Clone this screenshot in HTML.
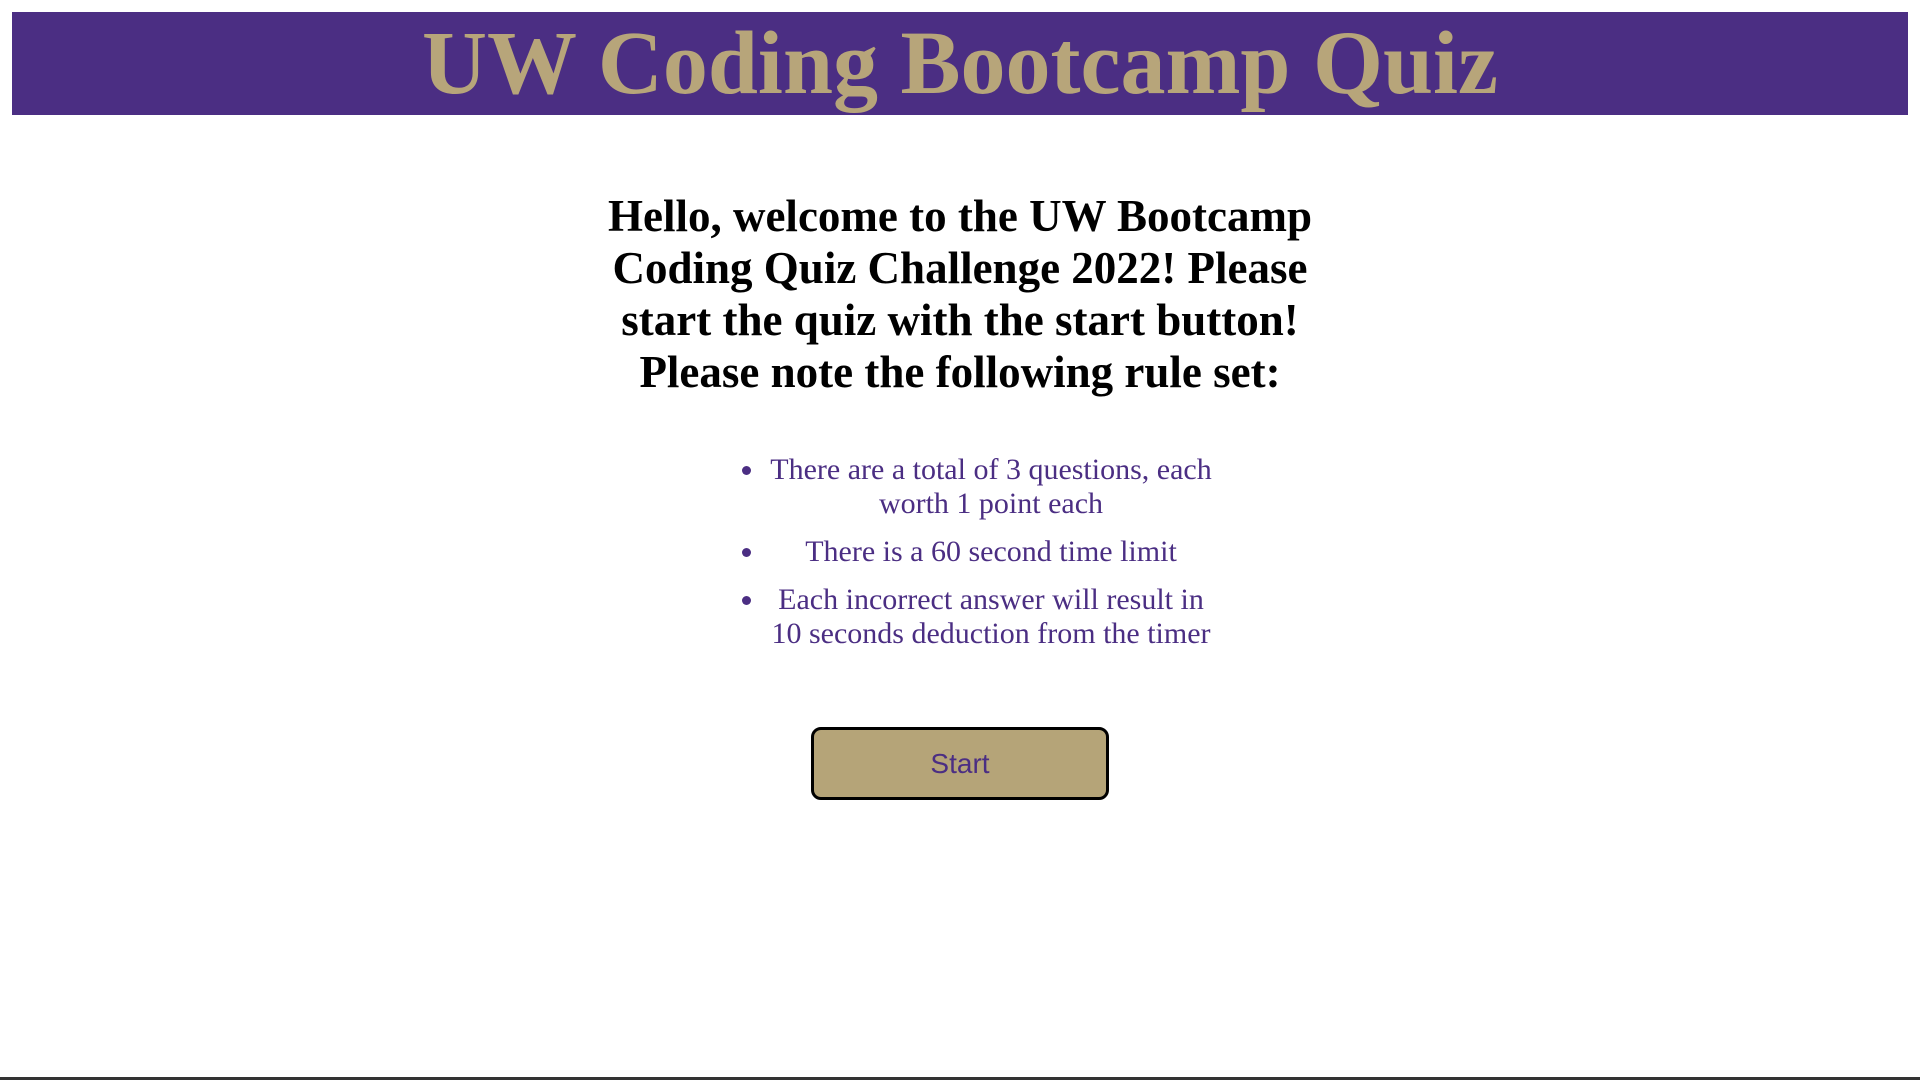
<!DOCTYPE html>
<html><head><style>
html,body{margin:0;padding:0;width:1920px;height:1080px;background:#fff;overflow:hidden;position:relative}
.hdr{position:absolute;left:12px;top:12px;width:1896px;height:103px;background:#4b2e83}
.hdr h1{margin:0;text-align:center;font:bold 90px/103px "Liberation Serif",serif;color:#b7a57a;white-space:nowrap}
.intro{position:absolute;left:460px;width:1000px;top:190px;text-align:center;font:bold 45px/52px "Liberation Serif",serif;color:#000;margin:0;white-space:nowrap}
ul{position:absolute;left:726px;top:453px;width:450px;margin:0;padding:0 0 0 40px;color:#4b2e83;font:30px/34px "Liberation Serif",serif;text-align:center}
ul li{margin-bottom:14px}
.btn{position:absolute;left:811px;top:727px;width:292px;height:67px;border:3px solid #000;border-radius:10px;background:#b5a478;color:#4b2e83;font:28px/67px "Liberation Sans",sans-serif;text-align:center}
.bot{position:absolute;left:0;top:1077px;width:1920px;height:3px;background:#333}
</style></head><body>
<div class="hdr"><h1>UW Coding Bootcamp Quiz</h1></div>
<h2 class="intro">Hello, welcome to the UW Bootcamp<br>Coding Quiz Challenge 2022! Please<br>start the quiz with the start button!<br>Please note the following rule set:</h2>
<ul>
<li>There are a total of 3 questions, each worth 1 point each</li>
<li>There is a 60 second time limit</li>
<li>Each incorrect answer will result in 10 seconds deduction from the timer</li>
</ul>
<div class="btn">Start</div>
<div class="bot"></div>
</body></html>
